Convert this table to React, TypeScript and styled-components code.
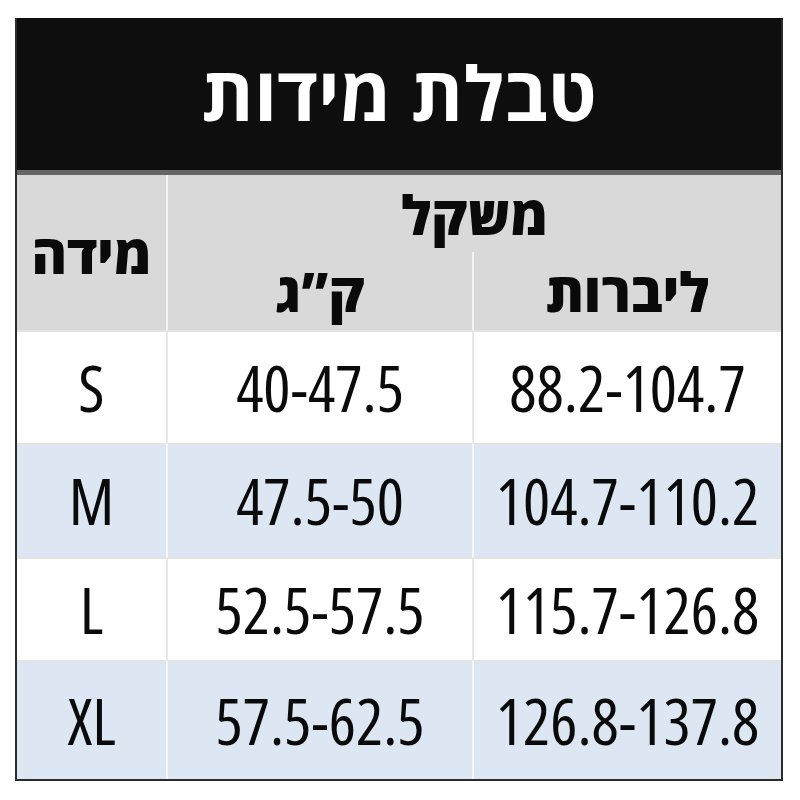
import styled, { createGlobalStyle } from 'styled-components'

const GlobalStyle = createGlobalStyle`
  html, body {
    margin: 0;
    padding: 0;
    background: #ffffff;
  }
`

const Page = styled.main`
  width: 800px;
  height: 800px;
  box-sizing: border-box;
  padding: 18px 17px 19px 15px;
  background: #ffffff;
`

const Chart = styled.section`
  height: 100%;
  display: flex;
  flex-direction: column;
  border: 2px solid #2b2b2b;
  border-top: none;
  box-sizing: border-box;
`

const Banner = styled.header`
  height: 152px;
  flex-shrink: 0;
  display: flex;
  align-items: center;
  justify-content: center;
  background: #0e0e0e;
  border-bottom: 5px solid #666666;
`

const BannerTitle = styled.h1`
  margin: 0;
  font-family: 'Open Sans', 'DejaVu Sans', sans-serif;
  font-weight: 700;
  font-size: 75px;
  line-height: 1;
  color: #ffffff;
  padding-bottom: 4px;
`

const Grid = styled.div`
  flex: 1;
  display: grid;
  grid-template-columns: 149px 306px 1fr;
  grid-template-rows: 77px 78px 113px 114px 103px 1fr;
`

const HeadCell = styled.div<{ $col: string; $row: string; $divider?: boolean }>`
  grid-column: ${(p) => p.$col};
  grid-row: ${(p) => p.$row};
  display: flex;
  align-items: center;
  justify-content: center;
  background: #d9d9d9;
  border-left: ${(p) => (p.$divider ? '2px solid #f4f4f4' : 'none')};
  font-family: 'Open Sans', 'DejaVu Sans', sans-serif;
  font-weight: 800;
  font-size: 54px;
  line-height: 1;
  color: #0a0a0a;
`

const Cell = styled.div<{ $shade: boolean; $divider?: boolean }>`
  display: flex;
  align-items: center;
  justify-content: center;
  background: ${(p) => (p.$shade ? '#dce7f3' : '#ffffff')};
  border-top: 2px solid #e4e4e4;
  border-left: ${(p) => (p.$divider ? `2px solid ${p.$shade ? '#f6f8fb' : '#e8e8e8'}` : 'none')};
  font-family: 'Open Sans', 'Liberation Sans Narrow', sans-serif;
  font-stretch: 75%;
  font-weight: 400;
  font-size: 64px;
  line-height: 1;
  color: #0a0a0a;
`

const rows = [
  { size: 'S', kg: '40-47.5', lb: '88.2-104.7' },
  { size: 'M', kg: '47.5-50', lb: '104.7-110.2' },
  { size: 'L', kg: '52.5-57.5', lb: '115.7-126.8' },
  { size: 'XL', kg: '57.5-62.5', lb: '126.8-137.8' },
]

export default function App() {
  return (
    <>
      <GlobalStyle />
      <Page>
        <Chart>
          <Banner>
            <BannerTitle dir="rtl">טבלת מידות</BannerTitle>
          </Banner>
          <Grid>
            <HeadCell $col="1" $row="1 / span 2" dir="rtl">מידה</HeadCell>
            <HeadCell $col="2 / span 2" $row="1" $divider dir="rtl">משקל</HeadCell>
            <HeadCell $col="2" $row="2" $divider dir="rtl">ק”ג</HeadCell>
            <HeadCell $col="3" $row="2" $divider dir="rtl">ליברות</HeadCell>
            {rows.map((r, i) => {
              const shade = i % 2 === 1
              return [
                <Cell key={r.size + 's'} $shade={shade}>{r.size}</Cell>,
                <Cell key={r.size + 'k'} $shade={shade} $divider>{r.kg}</Cell>,
                <Cell key={r.size + 'l'} $shade={shade} $divider>{r.lb}</Cell>,
              ]
            })}
          </Grid>
        </Chart>
      </Page>
    </>
  )
}
